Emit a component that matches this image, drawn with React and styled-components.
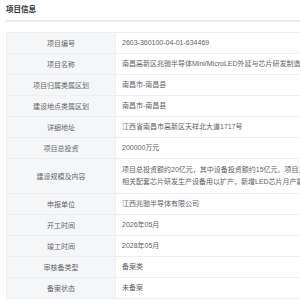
import styled, { createGlobalStyle } from "styled-components";

const GlobalStyle = createGlobalStyle`
  html, body {
    margin: 0;
    padding: 0;
    background: #ffffff;
    overflow: hidden;
  }
  body {
    font-family: "Liberation Sans", "Noto Sans CJK SC", sans-serif;
  }
`;

const Page = styled.div`
  width: 760px;
  padding: 0 0 0 6px;
`;

const Title = styled.div`
  height: 20px;
  line-height: 20px;
  font-size: 7.5px;
  font-weight: 700;
  color: #303133;
  border-bottom: 2px solid #ebebeb;
`;

const Table = styled.div`
  margin-top: 10px;
  border-top: 1px solid #eceef2;
  border-left: 1px solid #eceef2;
`;

const Row = styled.div`
  display: grid;
  grid-template-columns: 109px 1fr;
  min-height: 20px;
  border-bottom: 1px solid #eceef2;
`;

const Label = styled.div`
  display: flex;
  align-items: center;
  justify-content: center;
  background: #f5f6f8;
  border-right: 1px solid #eceef2;
  font-size: 7px;
  color: #666666;
`;

const Value = styled.div`
  display: flex;
  flex-direction: column;
  justify-content: center;
  padding: ${({ multi }) => (multi ? "5px 6px" : "0 6px")};
  font-size: 7px;
  line-height: 12px;
  color: #606266;
  white-space: nowrap;
`;

const rows = [
  ["项目编号", "2603-360100-04-01-634469"],
  ["项目名称", "南昌高新区兆驰半导体Mini/MicroLED外延与芯片研发制造扩产项目"],
  ["项目归属类属区划", "南昌市-南昌县"],
  ["建设地点类属区划", "南昌市-南昌县"],
  ["详细地址", "江西省南昌市高新区天祥北大道1717号"],
  ["项目总投资", "200000万元"],
  [
    "建设规模及内容",
    [
      "项目总投资额约20亿元，其中设备投资额约15亿元。项目主要建设内容为购置MOCVD等",
      "相关配套芯片研发生产设备用以扩产，新增LED芯片月产能约50万片。",
    ],
  ],
  ["申报单位", "江西兆驰半导体有限公司"],
  ["开工时间", "2026年05月"],
  ["竣工时间", "2028年05月"],
  ["审核备类型", "备案类"],
  ["备案状态", "未备案"],
];

const App = () => {
  return (
    <Page>
      <GlobalStyle />
      <Title>项目信息</Title>
      <Table>
        {rows.map(([label, value]) => (
          <Row key={label}>
            <Label>{label}</Label>
            {Array.isArray(value) ? (
              <Value multi>
                {value.map((line) => (
                  <span key={line}>{line}</span>
                ))}
              </Value>
            ) : (
              <Value>{value}</Value>
            )}
          </Row>
        ))}
      </Table>
    </Page>
  );
};

export default App;
